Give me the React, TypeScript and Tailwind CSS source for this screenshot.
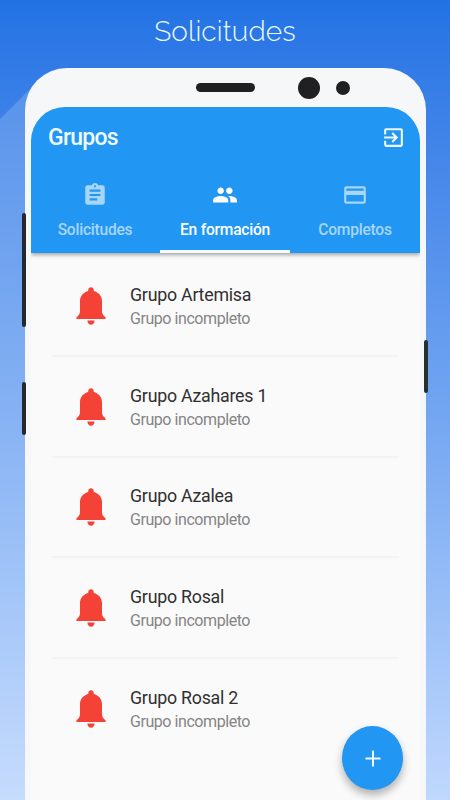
import { MdAssignment, MdCreditCard, MdExitToApp, MdPeople } from "react-icons/md";

const groups = ["Grupo Artemisa", "Grupo Azahares 1", "Grupo Azalea", "Grupo Rosal", "Grupo Rosal 2"];

const tabs = [
  { label: "Solicitudes", Icon: MdAssignment, active: false },
  { label: "En formación", Icon: MdPeople, active: true },
  { label: "Completos", Icon: MdCreditCard, active: false },
];

function Bell() {
  return (
    <svg viewBox="0 0 30 38" className="mt-px h-[38px] w-[30px] shrink-0" fill="#f44336">
      <path d="M15 0.2c1.6 0 2.600 1.100 2.700 2.600l.1 1.200C22.600 5.300 26 9 26 14v10c0 2.200.7 3.600 2.100 4.900l1.500 1.500v1.500H.4v-1.500L1.900 28.900C3.300 27.600 4 26.200 4 24V14C4 9 7.400 5.300 12.200 4l.1-1.200C12.400 1.300 13.400.2 15 .2z" />
      <path d="M11.400 33.500h7.200c-.1 2.600-1.500 4.200-3.600 4.200s-3.500-1.600-3.600-4.200z" />
    </svg>
  );
}

function GroupRow({ name }: { name: string }) {
  return (
    <li className="flex h-[100.6px] items-center border-b-2 border-[#f3f3f3] pl-[24px] last:border-transparent">
      <Bell />
      <div className="ml-[24px] flex flex-col pt-[3px] whitespace-nowrap">
        <span className="text-[17.8px] leading-[24px] tracking-[-0.24px] text-[#303030]">{name}</span>
        <span className="text-[16px] leading-[24px] tracking-[-0.44px] text-[#858585]">Grupo incompleto</span>
      </div>
    </li>
  );
}

export default function App() {
  return (
    <main className="relative isolate h-[800px] w-[450px] overflow-hidden bg-linear-to-b from-[#2272e4] via-[#70a4f1] to-[#c0d8fd] font-['Roboto',sans-serif]">
      <svg className="absolute left-0 top-0 -z-10" width="60" height="800">
        <defs>
          <linearGradient id="shade" x1="0" y1="80" x2="0" y2="800" gradientUnits="userSpaceOnUse">
            <stop offset="0" stopColor="#fff" stopOpacity=".17" />
            <stop offset="1" stopColor="#fff" stopOpacity=".1" />
          </linearGradient>
        </defs>
        <path d="M0 119L37 82H60V800H0z" fill="url(#shade)" />
      </svg>

      <h1 className="h-[68px] pt-[14px] text-center font-['Raleway','Lato',sans-serif] text-[28px] leading-[36px] font-[350] tracking-[0.15px] text-[#e9fbff]">
        Solicitudes
      </h1>

      <section className="relative ml-[25px] h-[732px] w-[401px] rounded-t-[42px] bg-[#f5f7f9] px-[6px]">
        <div className="flex h-[39px] items-center pl-[165px]">
          <span className="h-[9px] w-[59px] rounded-full bg-[#202022]" />
          <span className="ml-[43px] size-[22px] rounded-full bg-[#202022]" />
          <span className="ml-[16px] size-[14px] rounded-full bg-[#202022]" />
        </div>

        <div className="relative h-[693px] overflow-hidden rounded-t-[34px] bg-[#fafafa]">
          <header className="relative h-[146px] bg-[#2196f3] text-[#effaff] shadow-[0_2px_4px_rgba(0,0,0,0.35)]">
            <div className="flex h-[60px] items-center justify-between pr-[14px] pl-[17px]">
              <h2 className="pt-[2px] text-[23px] leading-[28px] font-medium tracking-[-0.75px]">Grupos</h2>
              <MdExitToApp className="size-[25px]" />
            </div>
            <nav className="-ml-px grid h-[86px] grid-cols-3">
              {tabs.map(({ label, Icon, active }) => (
                <div
                  key={label}
                  className={
                    active
                      ? "flex flex-col items-center border-b-[3px] border-[#f2faff] pt-[15px] text-white"
                      : "flex flex-col items-center border-b-[3px] border-transparent pt-[15px] text-[#a7d6fa]"
                  }
                >
                  <Icon className="size-[26px]" />
                  <span className="mt-[12px] text-[15.6px] leading-[20px] font-medium tracking-[-0.25px] whitespace-nowrap">{label}</span>
                </div>
              ))}
            </nav>
          </header>

          <ul className="ml-[21px] w-[347px] pt-[3.4px]">
            {groups.map((name) => (
              <GroupRow key={name} name={name} />
            ))}
          </ul>

          <button
            aria-label="Añadir grupo"
            className="absolute top-[619px] left-[311px] flex h-[64px] w-[61px] items-center justify-center rounded-[50%] bg-[#2196f3] shadow-[0_5px_9px_rgba(0,0,0,0.3)]"
          >
            <svg width="16" height="17" viewBox="0 0 16 17" stroke="#f2faff" strokeWidth="2">
              <path d="M8 0.500v16M.5 8.500h15" />
            </svg>
          </button>
        </div>

        <span className="absolute top-[145px] -left-[3px] h-[114px] w-[4px] rounded-[2px] bg-[#26282c]" />
        <span className="absolute top-[314px] -left-[3px] h-[53px] w-[4px] rounded-[2px] bg-[#26282c]" />
        <span className="absolute top-[272px] -right-[2px] h-[53px] w-[4px] rounded-[2px] bg-[#26302f]" />
      </section>
    </main>
  );
}
